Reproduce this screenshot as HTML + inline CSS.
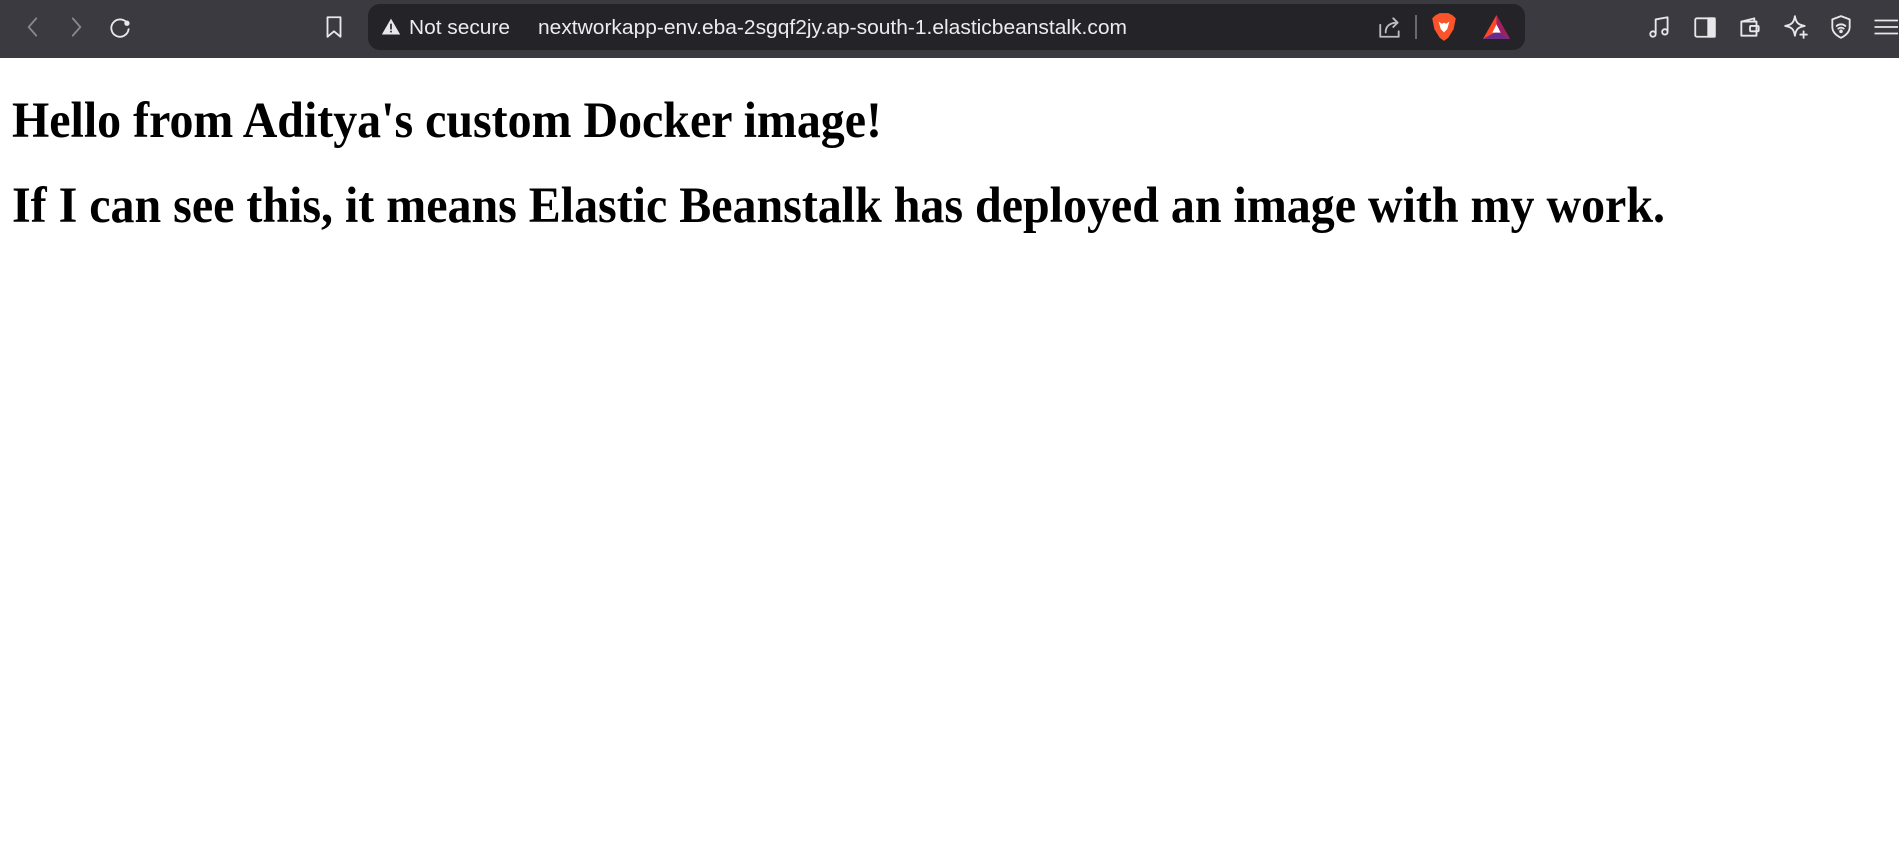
<!DOCTYPE html>
<html><head><meta charset="utf-8"><style>
html,body{margin:0;padding:0;width:1899px;height:853px;background:#fff;overflow:hidden}
#bar{position:absolute;left:0;top:0;width:1899px;height:58px;background:#3b3a40}
#addr{position:absolute;left:368px;top:4px;width:1157px;height:46px;background:#242328;border-radius:12px}
.ic{position:absolute;top:14px;width:26px;height:26px}
.ic svg{width:26px;height:26px;fill:none;stroke:#e8e8ea;stroke-width:1.7;stroke-linecap:round;stroke-linejoin:round}
</style></head><body>
<div id="bar">
<div id="addr"></div>
<div class="ic" style="left:20px"><svg viewBox="0 0 24 24" style="stroke:#88878c"><path d="M15 4 L8 12 L15 20"/></svg></div>
<div class="ic" style="left:63px"><svg viewBox="0 0 24 24" style="stroke:#88878c"><path d="M9 4 L16 12 L9 20"/></svg></div>
<div class="ic" style="left:108px"><svg viewBox="0 0 24 24"><path d="M18 9 A8 8 0 1 0 19 14"/><circle cx="17.5" cy="8.5" r="1.6" fill="#e8e8ea"/></svg></div>
<div class="ic" style="left:321px"><svg viewBox="0 0 24 24"><path d="M6 3 H18 V21 L12 16 L6 21 Z"/></svg></div>
<div class="ic" style="left:381px;top:17px;width:20px;height:20px"><svg viewBox="0 0 24 24" style="width:20px;height:20px;fill:#e8e8ea;stroke:none"><path d="M12 2 L23 21 H1 Z"/><rect x="11" y="8" width="2" height="7" fill="#242328"/><rect x="11" y="16.5" width="2" height="2" fill="#242328"/></svg></div>
<svg style="position:absolute;left:409px;top:12px" width="120" height="30"><text x="0" y="22" textLength="101" lengthAdjust="spacingAndGlyphs" font-family="Liberation Sans" font-size="20" fill="#ececee">Not secure</text></svg>
<svg style="position:absolute;left:538px;top:12px" width="600" height="30"><text x="0" y="22" textLength="589" lengthAdjust="spacingAndGlyphs" font-family="Liberation Sans" font-size="20" fill="#ececee">nextworkapp-env.eba-2sgqf2jy.ap-south-1.elasticbeanstalk.com</text></svg>
<div class="ic" style="left:1377px"><svg viewBox="0 0 24 24" style="stroke:#bdbcc0"><path d="M3 10 V21 H20 V16"/><path d="M8 17 C8 11 12 8 19 8"/><path d="M15 4 L19 8 L15 12"/></svg></div>
<div style="position:absolute;left:1415px;top:15px;width:2px;height:24px;background:#6a696e"></div>
<svg style="position:absolute;left:1431px;top:12px" width="26" height="30" viewBox="0 0 24 28"><path d="M4 3 L8 1 H16 L20 3 L23 6 L21 16 L16 24 L12 27 L8 24 L3 16 L1 6 Z" fill="#fb542b"/><path d="M7 9 L10 11 L12 10 L14 11 L17 9 L15 16 L12 19 L9 16 Z" fill="#fff"/></svg>
<svg style="position:absolute;left:1482px;top:14px" width="29" height="27" viewBox="0 0 28 26"><path d="M14 1 L27 24 H1 Z" fill="#ff4724"/><path d="M14 1 L27 24 L14 17 Z" fill="#9e1f63"/><path d="M1 24 H27 L14 17 Z" fill="#662d91"/><path d="M14 10 L18 18 H10 Z" fill="#fff"/></svg>
<div class="ic" style="left:1647px"><svg viewBox="0 0 24 24"><path d="M8 18 V5 L19 3 V16"/><circle cx="5.5" cy="18.5" r="2.5"/><circle cx="16.5" cy="16.5" r="2.5"/></svg></div>
<div class="ic" style="left:1692px"><svg viewBox="0 0 24 24"><rect x="3" y="4" width="18" height="17" rx="1.5"/><rect x="15" y="4" width="6" height="17" fill="#e8e8ea"/></svg></div>
<div class="ic" style="left:1737px"><svg viewBox="0 0 24 24"><path d="M4 7 H18 V20 H4 Z"/><path d="M4 7 L16 4 V7"/><rect x="12" y="11" width="8" height="5" rx="1"/></svg></div>
<div class="ic" style="left:1783px"><svg viewBox="0 0 24 24"><path d="M11 2 C12 8 14 10 20 11 C14 12 12 14 11 20 C10 14 8 12 2 11 C8 10 10 8 11 2 Z"/><path d="M19 16 V22 M16 19 H22"/></svg></div>
<div class="ic" style="left:1828px"><svg viewBox="0 0 24 24"><path d="M12 2 L20 5 V12 C20 17 16 20 12 22 C8 20 4 17 4 12 V5 Z"/><path d="M8 11 C10 9 14 9 16 11 M9.5 13.5 C11 12.5 13 12.5 14.5 13.5"/><circle cx="12" cy="16" r="0.8" fill="#e8e8ea"/></svg></div>
<div class="ic" style="left:1872px"><svg viewBox="0 0 24 24"><path d="M3 6 H24 M3 12 H24 M3 18 H24"/></svg></div>
</div>
<svg style="position:absolute;left:0;top:60px" width="1899" height="200">
<text x="12" y="77" textLength="870" lengthAdjust="spacingAndGlyphs" font-family="Liberation Serif" font-weight="bold" font-size="51" fill="#000">Hello from Aditya's custom Docker image!</text>
<text x="12" y="162" textLength="1653" lengthAdjust="spacingAndGlyphs" font-family="Liberation Serif" font-weight="bold" font-size="51" fill="#000">If I can see this, it means Elastic Beanstalk has deployed an image with my work.</text>
</svg>
</body></html>
